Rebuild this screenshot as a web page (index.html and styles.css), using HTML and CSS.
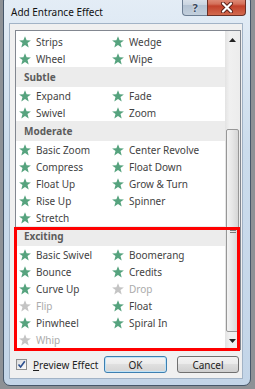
FILE: index.html
```html
<!DOCTYPE html>
<html>
<head>
<meta charset="utf-8">
<link rel="stylesheet" href="styles.css">
</head>
<body>
<svg class="defs" width="0" height="0">
  <symbol id="star" viewBox="0 0 12 12">
    <polygon points="6,0.2 7.6,4.3 11.9,4.5 8.5,7.1 9.7,11.6 6,9.1 2.3,11.6 3.5,7.1 0.1,4.5 4.4,4.3"/>
  </symbol>
</svg>
<div class="window">
  <div class="titlebar">
    <span class="title">Add Entrance Effect</span>
    <div class="caption-btns">
      <div class="cbtn help">?</div>
      <div class="cbtn close">
        <svg width="14" height="11" viewBox="0 0 14 11"><path d="M3 1.5 L11 9.5 M11 1.5 L3 9.5" stroke="#5a2018" stroke-width="4" stroke-linecap="round"/><path d="M3 1.5 L11 9.5 M11 1.5 L3 9.5" stroke="#fff" stroke-width="2.2" stroke-linecap="round"/></svg>
      </div>
    </div>
  </div>
  <div class="panel">
    <div class="listwrap">
      <div class="listbox">
        <div class="list">
          <div class="row"><div class="item"><svg class="star"><use href="#star"/></svg>Strips</div><div class="item"><svg class="star"><use href="#star"/></svg>Wedge</div></div>
          <div class="row"><div class="item"><svg class="star"><use href="#star"/></svg>Wheel</div><div class="item"><svg class="star"><use href="#star"/></svg>Wipe</div></div>
          <div class="hdr">Subtle</div>
          <div class="row"><div class="item"><svg class="star"><use href="#star"/></svg>Expand</div><div class="item"><svg class="star"><use href="#star"/></svg>Fade</div></div>
          <div class="row"><div class="item"><svg class="star"><use href="#star"/></svg>Swivel</div><div class="item"><svg class="star"><use href="#star"/></svg>Zoom</div></div>
          <div class="hdr">Moderate</div>
          <div class="row"><div class="item"><svg class="star"><use href="#star"/></svg>Basic Zoom</div><div class="item"><svg class="star"><use href="#star"/></svg>Center Revolve</div></div>
          <div class="row"><div class="item"><svg class="star"><use href="#star"/></svg>Compress</div><div class="item"><svg class="star"><use href="#star"/></svg>Float Down</div></div>
          <div class="row"><div class="item"><svg class="star"><use href="#star"/></svg>Float Up</div><div class="item"><svg class="star"><use href="#star"/></svg>Grow &amp; Turn</div></div>
          <div class="row"><div class="item"><svg class="star"><use href="#star"/></svg>Rise Up</div><div class="item"><svg class="star"><use href="#star"/></svg>Spinner</div></div>
          <div class="row"><div class="item"><svg class="star"><use href="#star"/></svg>Stretch</div></div>
          <div class="hdr">Exciting</div>
          <div class="row"><div class="item"><svg class="star"><use href="#star"/></svg>Basic Swivel</div><div class="item"><svg class="star"><use href="#star"/></svg>Boomerang</div></div>
          <div class="row"><div class="item"><svg class="star"><use href="#star"/></svg>Bounce</div><div class="item"><svg class="star"><use href="#star"/></svg>Credits</div></div>
          <div class="row"><div class="item"><svg class="star"><use href="#star"/></svg>Curve Up</div><div class="item disabled"><svg class="star"><use href="#star"/></svg>Drop</div></div>
          <div class="row"><div class="item disabled"><svg class="star"><use href="#star"/></svg>Flip</div><div class="item"><svg class="star"><use href="#star"/></svg>Float</div></div>
          <div class="row"><div class="item"><svg class="star"><use href="#star"/></svg>Pinwheel</div><div class="item"><svg class="star"><use href="#star"/></svg>Spiral In</div></div>
          <div class="row"><div class="item disabled"><svg class="star"><use href="#star"/></svg>Whip</div></div>
        </div>
        <div class="scrollbar">
          <div class="arrow"><svg width="7" height="4" viewBox="0 0 7 4"><polygon points="3.5,0 7,4 0,4" fill="#222"/></svg></div>
          <div class="track">
            <div class="thumb"><span class="grip"></span><span class="grip"></span><span class="grip"></span></div>
          </div>
          <div class="arrow"><svg width="7" height="4" viewBox="0 0 7 4"><polygon points="0,0 7,0 3.5,4" fill="#222"/></svg></div>
        </div>
      </div>
      <div class="highlight"></div>
    </div>
    <div class="footer">
      <div class="check">
        <svg width="9" height="9" viewBox="0 0 9 9"><path d="M1.5 4.5 L3.6 7 L7.8 1.2" fill="none" stroke="#2b4f8f" stroke-width="1.6"/></svg>
      </div>
      <span class="label"><u>P</u>review Effect</span>
      <div class="buttons">
        <div class="btn default">OK</div>
        <div class="btn">Cancel</div>
      </div>
    </div>
  </div>
</div>
</body>
</html>
```
FILE: styles.css
```css
html, body {
  margin: 0;
  padding: 0;
}
body {
  width: 255px;
  height: 389px;
  overflow: hidden;
  background: #8d9196;
  font-family: "Noto Sans", "Open Sans", sans-serif;
}
.defs {
  position: absolute;
}
.window {
  box-sizing: border-box;
  margin: -6px 0 0 3px;
  width: 248px;
  height: 392px;
  border: 1px solid #46576a;
  border-radius: 7px;
  background: linear-gradient(#e4edf6, #cbdcec 40%, #c3d5e8);
  display: flex;
  flex-direction: column;
}
.titlebar {
  height: 28px;
  display: flex;
  align-items: flex-start;
  flex-shrink: 0;
}
.title {
  padding: 11px 0 0 7px;
  font-size: 10px;
  line-height: 13px;
  color: #111;
}
.caption-btns {
  margin-left: auto;
  margin-right: 4px;
  display: flex;
}
.cbtn {
  box-sizing: border-box;
  height: 21px;
  display: flex;
  align-items: center;
  justify-content: center;
  padding-top: 4px;
}
.help {
  width: 25px;
  border: 1px solid #6d7f94;
  border-top: none;
  border-right: none;
  border-radius: 0 0 0 4px;
  background: linear-gradient(#e6ecf2, #c9d4e0 50%, #b3c2d2 51%, #c2cfdc);
  font-size: 11px;
  font-weight: bold;
  color: #38475a;
  text-shadow: 0 0 2px #fff;
}
.close {
  width: 39px;
  border: 1px solid #6a3026;
  border-top: none;
  border-radius: 0 0 4px 0;
  background: linear-gradient(#e9a897, #d4705a 45%, #c2412b 55%, #d26a4e);
}
.panel {
  box-sizing: border-box;
  margin: 0 7px 0 5px;
  height: 356px;
  border: 1px solid #a2b3c6;
  background: #f0f0f0;
  padding: 6px 1px 0 5px;
  display: flex;
  flex-direction: column;
}
.listwrap {
  position: relative;
}
.listbox {
  box-sizing: border-box;
  height: 320px;
  border: 1px solid #828790;
  background: #fff;
  display: flex;
}
.list {
  flex: 1;
  padding-top: 2px;
  font-size: 10px;
  color: #434343;
}
.row {
  height: 17px;
  display: grid;
  grid-template-columns: 93px 1fr;
}
.item {
  display: flex;
  align-items: center;
  padding-left: 4px;
  gap: 6px;
  white-space: nowrap;
}
.star {
  width: 12px;
  height: 12px;
  margin-left: -1px;
  margin-right: -1px;
  fill: #56a37e;
  flex-shrink: 0;
}
.item.disabled {
  color: #ababab;
}
.item.disabled .star {
  fill: #c4c4c4;
}
.hdr {
  height: 20px;
  background: #ececec;
  display: flex;
  align-items: center;
  padding-left: 8px;
  font-weight: bold;
  color: #5c5c5c;
}
.scrollbar {
  width: 15px;
  display: flex;
  flex-direction: column;
  background: linear-gradient(90deg, #e3e3e3, #f0f0f0 30%, #ececec);
}
.arrow {
  height: 17px;
  display: flex;
  align-items: center;
  justify-content: center;
}
.track {
  flex: 1;
  padding-top: 81px;
}
.thumb {
  box-sizing: border-box;
  margin: 0 1px 0 1px;
  height: 203px;
  border: 1px solid #979797;
  border-radius: 2px;
  background: linear-gradient(90deg, #f3f3f3, #e6e6e6 50%, #d6d6d6);
  display: flex;
  flex-direction: column;
  align-items: center;
  justify-content: center;
  gap: 1px;
}
.grip {
  width: 6px;
  height: 1px;
  background: #7a7a7a;
}
.highlight {
  position: absolute;
  box-sizing: border-box;
  left: -1px;
  top: 197px;
  width: 226px;
  height: 124px;
  border: 3px solid #ff0000;
}
.footer {
  margin-top: 6px;
  display: flex;
  align-items: center;
  height: 17px;
}
.check {
  box-sizing: border-box;
  width: 11px;
  height: 11px;
  margin-left: 1px;
  border: 1px solid #8e8f8f;
  background: linear-gradient(135deg, #dcdcdc, #fdfdfd);
  display: flex;
  align-items: center;
  justify-content: center;
}
.label {
  margin-left: 6px;
  font-size: 10px;
  color: #1e1e1e;
}
.buttons {
  margin-left: auto;
  margin-right: 2px;
  display: flex;
  gap: 10px;
}
.btn {
  box-sizing: border-box;
  width: 62px;
  height: 17px;
  border: 1px solid #707070;
  border-radius: 3px;
  background: linear-gradient(#f2f2f2, #ebebeb 45%, #dddddd 50%, #cfcfcf);
  display: flex;
  align-items: center;
  justify-content: center;
  font-size: 10px;
  color: #1e1e1e;
}
.btn.default {
  width: 63px;
  border-color: #3c7fb1;
  box-shadow: inset 0 0 0 1px #bfe3f7;
  background: linear-gradient(#f4f4f4, #ececec 45%, #e0e0e0 50%, #d4d4d4);
}
```
